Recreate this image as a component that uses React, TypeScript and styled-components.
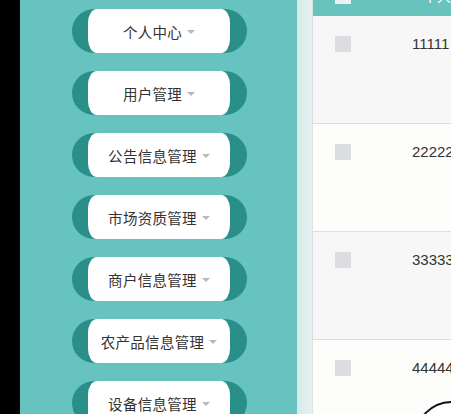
import { ReactElement } from 'react';
import styled, { createGlobalStyle } from 'styled-components';

const GlobalStyle = createGlobalStyle`
  html, body {
    margin: 0;
    padding: 0;
    overflow: hidden;
    background: #000;
  }
  body {
    font-family: 'Noto Sans CJK SC', 'Liberation Sans', sans-serif;
  }
`;

const Page = styled.div`
  display: flex;
  width: 451px;
  height: 414px;
  overflow: hidden;
  position: relative;
`;

const Edge = styled.div`
  width: 20px;
  flex-shrink: 0;
  background: #000;
`;

const Sidebar = styled.nav`
  width: 277px;
  flex-shrink: 0;
  background: #67c3bf;
  display: flex;
  flex-direction: column;
  gap: 18px;
  padding: 9px 0 0 52px;
  box-sizing: border-box;
`;

const Pill = styled.div`
  width: 175px;
  height: 44px;
  flex-shrink: 0;
  border-radius: 22px;
  background: #2b8f89;
  display: flex;
  justify-content: center;
`;

const PillFace = styled.div`
  width: 142px;
  height: 44px;
  margin-left: -1px;
  background: #fff;
  border-radius: 9px / 14px;
  display: flex;
  align-items: center;
  justify-content: center;
  gap: 5px;
  font-size: 14.5px;
  color: #333;
  letter-spacing: 0.3px;
`;

const Caret = styled.span`
  width: 0;
  height: 0;
  border-left: 4px solid transparent;
  border-right: 4px solid transparent;
  border-top: 4px solid #b8b8b8;
  margin-top: 1px;
`;

const Gutter = styled.div`
  width: 15px;
  flex-shrink: 0;
  background: linear-gradient(90deg, #d7ebe9, #e6f1f0);
  border-right: 1px solid #d9e3e2;
`;

const Table = styled.div`
  flex: 1;
  display: flex;
  flex-direction: column;
  margin-top: -24px;
  background: #fff;
`;

const HeadRow = styled.div`
  height: 40px;
  flex-shrink: 0;
  background: #68c3bf;
  display: flex;
  align-items: center;
  padding-left: 22px;
  gap: 72px;
  color: #fff;
  font-size: 14px;
  white-space: nowrap;
`;

const Row = styled.div<{ $striped: boolean }>`
  height: 108px;
  flex-shrink: 0;
  display: flex;
  align-items: flex-start;
  padding: 20px 0 0 22px;
  gap: 61px;
  box-sizing: border-box;
  background: ${(p) => (p.$striped ? '#f7f7f7' : '#fdfdfc')};
  border-bottom: 1px solid #dedede;
  white-space: nowrap;
`;

const Box = styled.span<{ $light?: boolean }>`
  width: 16px;
  height: 16px;
  flex-shrink: 0;
  background: ${(p) => (p.$light ? '#e8f4f3' : '#dcdde0')};
`;

const Cell = styled.span`
  font-family: 'Liberation Sans', sans-serif;
  font-size: 15px;
  line-height: 16px;
  color: #333;
`;

const Bubble = styled.div`
  position: absolute;
  left: 414px;
  top: 401px;
  width: 72px;
  height: 72px;
  border-radius: 50%;
  border: 2px solid #111;
  background: #fff;
`;

const menus = [
  '个人中心',
  '用户管理',
  '公告信息管理',
  '市场资质管理',
  '商户信息管理',
  '农产品信息管理',
  '设备信息管理',
];

const rows = ['11111', '22222', '33333', '44444'];

function App(): ReactElement {
  return (
    <>
      <GlobalStyle />
      <Page>
        <Edge />
        <Sidebar>
          {menus.map((m) => (
            <Pill key={m}>
              <PillFace>
                {m}
                <Caret />
              </PillFace>
            </Pill>
          ))}
        </Sidebar>
        <Gutter />
        <Table>
          <HeadRow>
            <Box $light />
            <span>个人</span>
          </HeadRow>
          {rows.map((r, i) => (
            <Row key={r} $striped={i % 2 === 0}>
              <Box />
              <Cell>{r}</Cell>
            </Row>
          ))}
        </Table>
        <Bubble />
      </Page>
    </>
  );
}

export default App;
